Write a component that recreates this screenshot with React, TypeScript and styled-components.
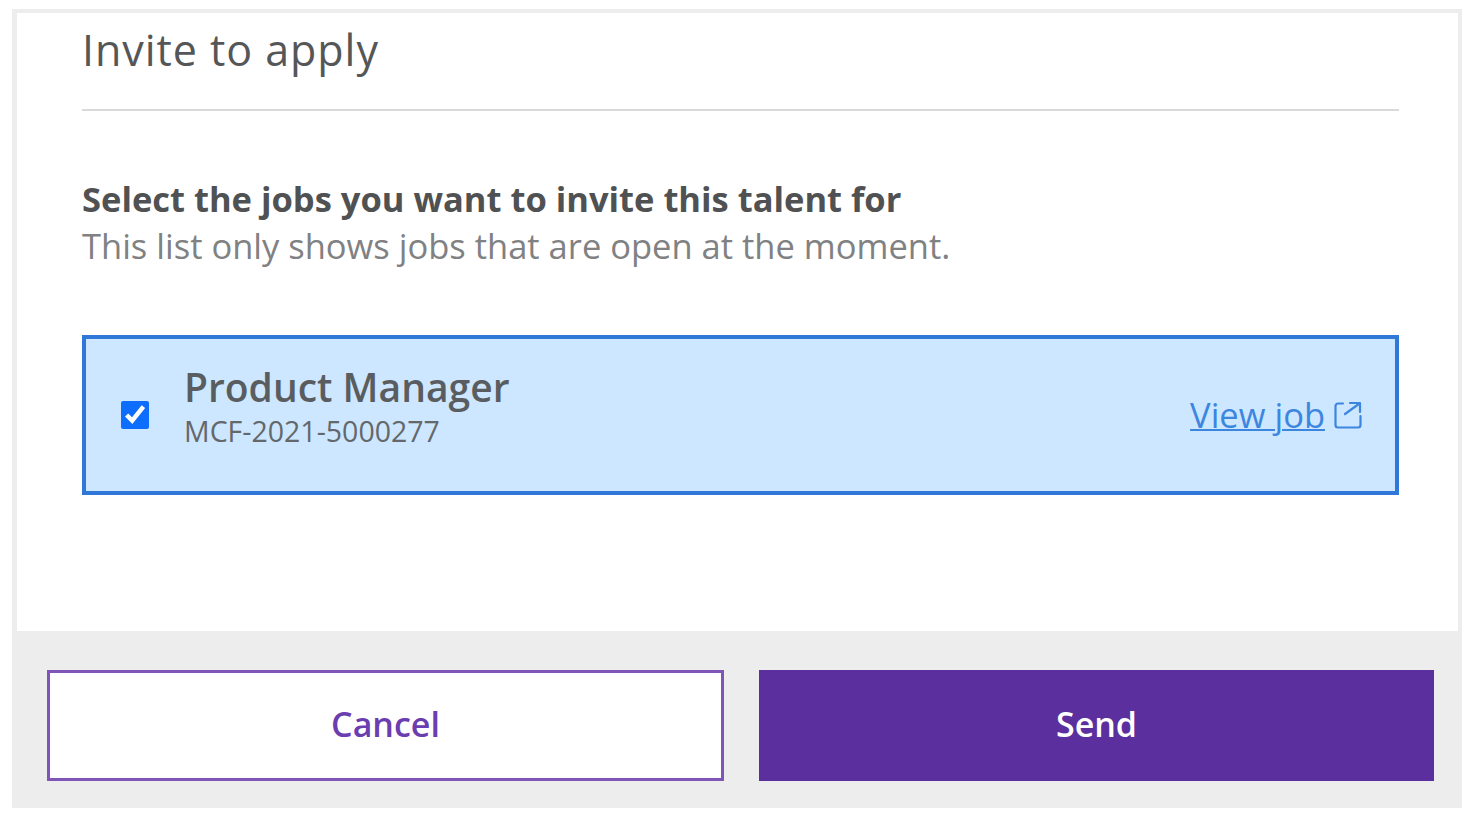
import React from "react";
import styled, { createGlobalStyle } from "styled-components";

const GlobalStyle = createGlobalStyle`
  html, body {
    margin: 0;
    padding: 0;
    background: #ffffff;
    font-family: "Open Sans", "Noto Sans", sans-serif;
  }
`;

const Page = styled.div`
  width: 1472px;
  height: 814px;
  padding: 9px 10px 6px 12px;
  box-sizing: border-box;
  overflow: hidden;
`;

const Modal = styled.div`
  height: 100%;
  display: flex;
  flex-direction: column;
  background: #ededed;
  padding: 4px 4px 0 5px;
  box-sizing: border-box;
`;

const Body = styled.div`
  height: 618px;
  background: #ffffff;
  padding: 0 59px 0 65px;
  box-sizing: border-box;
`;

const Title = styled.h1`
  margin: 0;
  height: 87px;
  padding-top: 9px;
  border-bottom: 2px solid #d9d9d9;
  font-size: 43px;
  letter-spacing: 0.95px;
  line-height: 56px;
  font-weight: 400;
  color: #555657;
`;

const Heading = styled.h2`
  margin: 66px 0 0;
  font-size: 34.5px;
  line-height: 44px;
  font-weight: 700;
  color: #505152;
`;

const Hint = styled.p`
  margin: 1px 0 0;
  font-size: 34.5px;
  line-height: 48px;
  font-weight: 400;
  color: #808182;
`;

const JobRow = styled.label`
  margin-top: 65px;
  height: 160px;
  display: flex;
  align-items: center;
  padding: 0 33px 0 35px;
  box-sizing: border-box;
  background: #cce7ff;
  border: 4px solid #2f78d8;
`;

const Check = styled.input`
  width: 28px;
  height: 28px;
  margin: 0 35px 0 0;
  accent-color: #0d6efd;
`;

const JobText = styled.div`
  flex: 1;
  display: flex;
  flex-direction: column;
  padding-bottom: 19px;
`;

const JobName = styled.div`
  font-size: 39px;
  line-height: 50px;
  font-weight: 600;
  color: #5a5d60;
`;

const JobCode = styled.div`
  font-size: 28.5px;
  line-height: 38px;
  color: #65686b;
`;

const JobLink = styled.a`
  display: flex;
  align-items: center;
  gap: 9px;
  font-size: 34.5px;
  line-height: 44px;
  color: #3d86e0;
  text-decoration: underline;
  text-decoration-thickness: 2px;
`;

const Footer = styled.div`
  flex: 1;
  display: grid;
  grid-template-columns: 677px 675px;
  gap: 35px;
  padding: 39px 25px 27px 30px;
  box-sizing: border-box;
`;

const Button = styled.button<{ $primary?: boolean }>`
  padding: 0 0 3px;
  font-family: inherit;
  font-size: 34px;
  font-weight: 600;
  border: 3px solid ${(p) => (p.$primary ? "#5b2f9e" : "#7f55b8")};
  background: ${(p) => (p.$primary ? "#5b2f9e" : "#ffffff")};
  color: ${(p) => (p.$primary ? "#ffffff" : "#6a3db0")};
`;

const ExternalIcon = () => (
  <svg width="28" height="28" viewBox="0 0 28 28" fill="none" stroke="#3d86e0" strokeWidth="2.2" strokeLinecap="round" strokeLinejoin="round">
    <path d="M9 2.5H4a2.5 2.5 0 0 0-2.5 2.5v19a2.5 2.5 0 0 0 2.5 2.5h20a2.5 2.5 0 0 0 2.5-2.5v-9" />
    <path d="M11 13L25.5 2.5" />
    <path d="M16 2h10v9" />
  </svg>
);

export default function App() {
  return (
    <Page>
      <GlobalStyle />
      <Modal>
        <Body>
          <Title>Invite to apply</Title>
          <Heading>Select the jobs you want to invite this talent for</Heading>
          <Hint>This list only shows jobs that are open at the moment.</Hint>
          <JobRow>
            <Check type="checkbox" defaultChecked />
            <JobText>
              <JobName>Product Manager</JobName>
              <JobCode>MCF-2021-5000277</JobCode>
            </JobText>
            <JobLink href="#">
              View job
              <ExternalIcon />
            </JobLink>
          </JobRow>
        </Body>
        <Footer>
          <Button>Cancel</Button>
          <Button $primary>Send</Button>
        </Footer>
      </Modal>
    </Page>
  );
}
